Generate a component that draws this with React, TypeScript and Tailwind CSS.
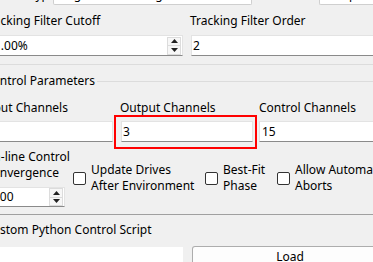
import React from "react";

const font = { fontFamily: '"Noto Sans", "Liberation Sans", sans-serif' };

function Spin() {
  return (
    <div className="flex flex-col w-[14px] h-[18px] mr-[1px] self-center shrink-0">
      <div className="flex-1 flex items-center justify-center border border-[#dcdcdc] bg-[#f7f7f7]">
        <svg width="7" height="4" viewBox="0 0 7 4"><path d="M0 4 L3.5 0 L7 4 Z" fill="#222" /></svg>
      </div>
      <div className="flex-1 flex items-center justify-center border border-t-0 border-[#dcdcdc] bg-[#f7f7f7]">
        <svg width="7" height="4" viewBox="0 0 7 4"><path d="M0 0 L3.5 4 L7 0 Z" fill="#222" /></svg>
      </div>
    </div>
  );
}

function CheckOpt({ a, b, w }: { a: string; b: string; w: string }) {
  return (
    <div className={`flex items-center gap-[5px] shrink-0 ${w}`}>
      <div className="w-[13px] h-[13px] shrink-0 border border-[#333] rounded-[2px] bg-white" />
      <div className="leading-[16px] whitespace-nowrap">
        <div>{a}</div>
        <div>{b}</div>
      </div>
    </div>
  );
}

export default function App() {
  return (
    <div
      className="w-[373px] h-[262px] overflow-hidden bg-[#f0f0f0] text-[12px] leading-[16px] text-black flex flex-col"
      style={font}
    >
      {/* tab strip */}
      <div className="h-[5px] flex overflow-hidden shrink-0">
        <div className="w-[53px] overflow-hidden">
          <div className="mt-[-13px] ml-[2px] whitespace-nowrap">Sine Type</div>
        </div>
        <div className="w-[199px] h-[5px] border border-t-0 border-[#cfcfcf] rounded-b-[2px] bg-white overflow-hidden">
          <div className="mt-[-13px] ml-[10px] whitespace-nowrap">Signal Processing</div>
        </div>
        <div className="w-[67px]" />
        <div className="flex-1 h-[5px] border border-t-0 border-r-0 border-[#cfcfcf] rounded-bl-[2px] bg-white overflow-hidden">
          <div className="mt-[-13px] ml-[8px] whitespace-nowrap">Output</div>
        </div>
      </div>

      {/* tracking filter row */}
      <div className="flex mt-[8px] shrink-0">
        <div className="w-[183px] shrink-0 flex flex-col">
          <div className="h-[22px] ml-[-17px] whitespace-nowrap">Tracking Filter Cutoff</div>
          <div className="h-[21px] bg-white border border-l-0 border-[#e3e3e3] border-b-[#8a8a8a] flex items-center">
            <div className="flex-1 ml-[-6px]">1.00%</div>
            <Spin />
          </div>
        </div>
        <div className="w-[8px] shrink-0" />
        <div className="flex-1 flex flex-col">
          <div className="h-[22px] ml-[-1px] whitespace-nowrap">Tracking Filter Order</div>
          <div className="h-[21px] bg-white border border-r-0 border-[#e3e3e3] border-b-[#8a8a8a] flex items-center pl-[1px]">
            2
          </div>
        </div>
      </div>

      {/* separator */}
      <div className="h-[1px] bg-[#dcdcdc] mt-[8px] shrink-0" />

      {/* group title */}
      <div className="flex items-center mt-[8px] h-[16px] shrink-0">
        <div className="ml-[-15px] whitespace-nowrap">Control Parameters</div>
        <div className="flex-1 h-[1px] bg-[#dcdcdc] ml-[2px]" />
      </div>

      {/* channels row */}
      <div className="flex mt-[11px] shrink-0">
        <div className="w-[132px] ml-[-19px] shrink-0 flex flex-col">
          <div className="h-[21px] ml-[1px] whitespace-nowrap">Input Channels</div>
          <div className="h-[21px] bg-white border border-l-0 border-[#e3e3e3] border-b-[#8a8a8a]" />
        </div>
        <div className="w-[8px] shrink-0" />
        <div className="w-[132px] shrink-0 flex flex-col relative">
          <div className="h-[21px] ml-[-1px] whitespace-nowrap">Output Channels</div>
          <div className="h-[21px] bg-white border border-[#e3e3e3] border-b-[#8a8a8a] flex items-center pl-[1px]">
            3
          </div>
          <div className="absolute left-[-7px] right-[-4px] top-[15px] bottom-[-7px] border-2 border-[#ff0000]" />
        </div>
        <div className="w-[6px] shrink-0" />
        <div className="flex-1 flex flex-col">
          <div className="h-[21px] whitespace-nowrap">Control Channels</div>
          <div className="h-[21px] bg-white border border-r-0 border-[#e3e3e3] border-b-[#8a8a8a] flex items-center pl-[2px]">
            15
          </div>
        </div>
      </div>

      {/* options row */}
      <div className="flex mt-[7px] shrink-0">
        <div className="w-[65px] shrink-0 flex flex-col">
          <div className="ml-[-16px] whitespace-nowrap leading-[16px]">
            <div>On-line Control</div>
            <div className="ml-[1px]">Convergence</div>
          </div>
          <div className="h-[20px] mt-[6px] bg-white border border-l-0 border-[#e3e3e3] border-b-[#8a8a8a] flex items-center">
            <div className="flex-1 ml-[-7px]">100</div>
            <Spin />
          </div>
        </div>
        <div className="w-[8px] shrink-0" />
        <div className="flex mt-[13px] items-start">
          <CheckOpt a="Update Drives" b="After Environment" w="w-[132px]" />
          <CheckOpt a="Best-Fit" b="Phase" w="w-[72px]" />
          <CheckOpt a="Allow Automatic" b="Aborts" w="w-[120px]" />
        </div>
      </div>

      {/* bottom line */}
      <div className="h-[1px] bg-[#a0a0a0] mt-[7px] shrink-0" />

      {/* script */}
      <div className="mt-[7px] ml-[-15px] whitespace-nowrap h-[16px] shrink-0">Custom Python Control Script</div>
      <div className="flex items-start flex-1">
        <div className="w-[183px] h-[20px] mt-[9px] bg-white shrink-0" />
        <div className="w-[9px] shrink-0" />
        <div className="w-[196px] h-[24px] mt-[8px] shrink-0 border border-b-0 border-[#adadad] rounded-t-[3px] bg-[#fdfdfd] flex justify-center pt-[2px]">
          Load
        </div>
      </div>
    </div>
  );
}
